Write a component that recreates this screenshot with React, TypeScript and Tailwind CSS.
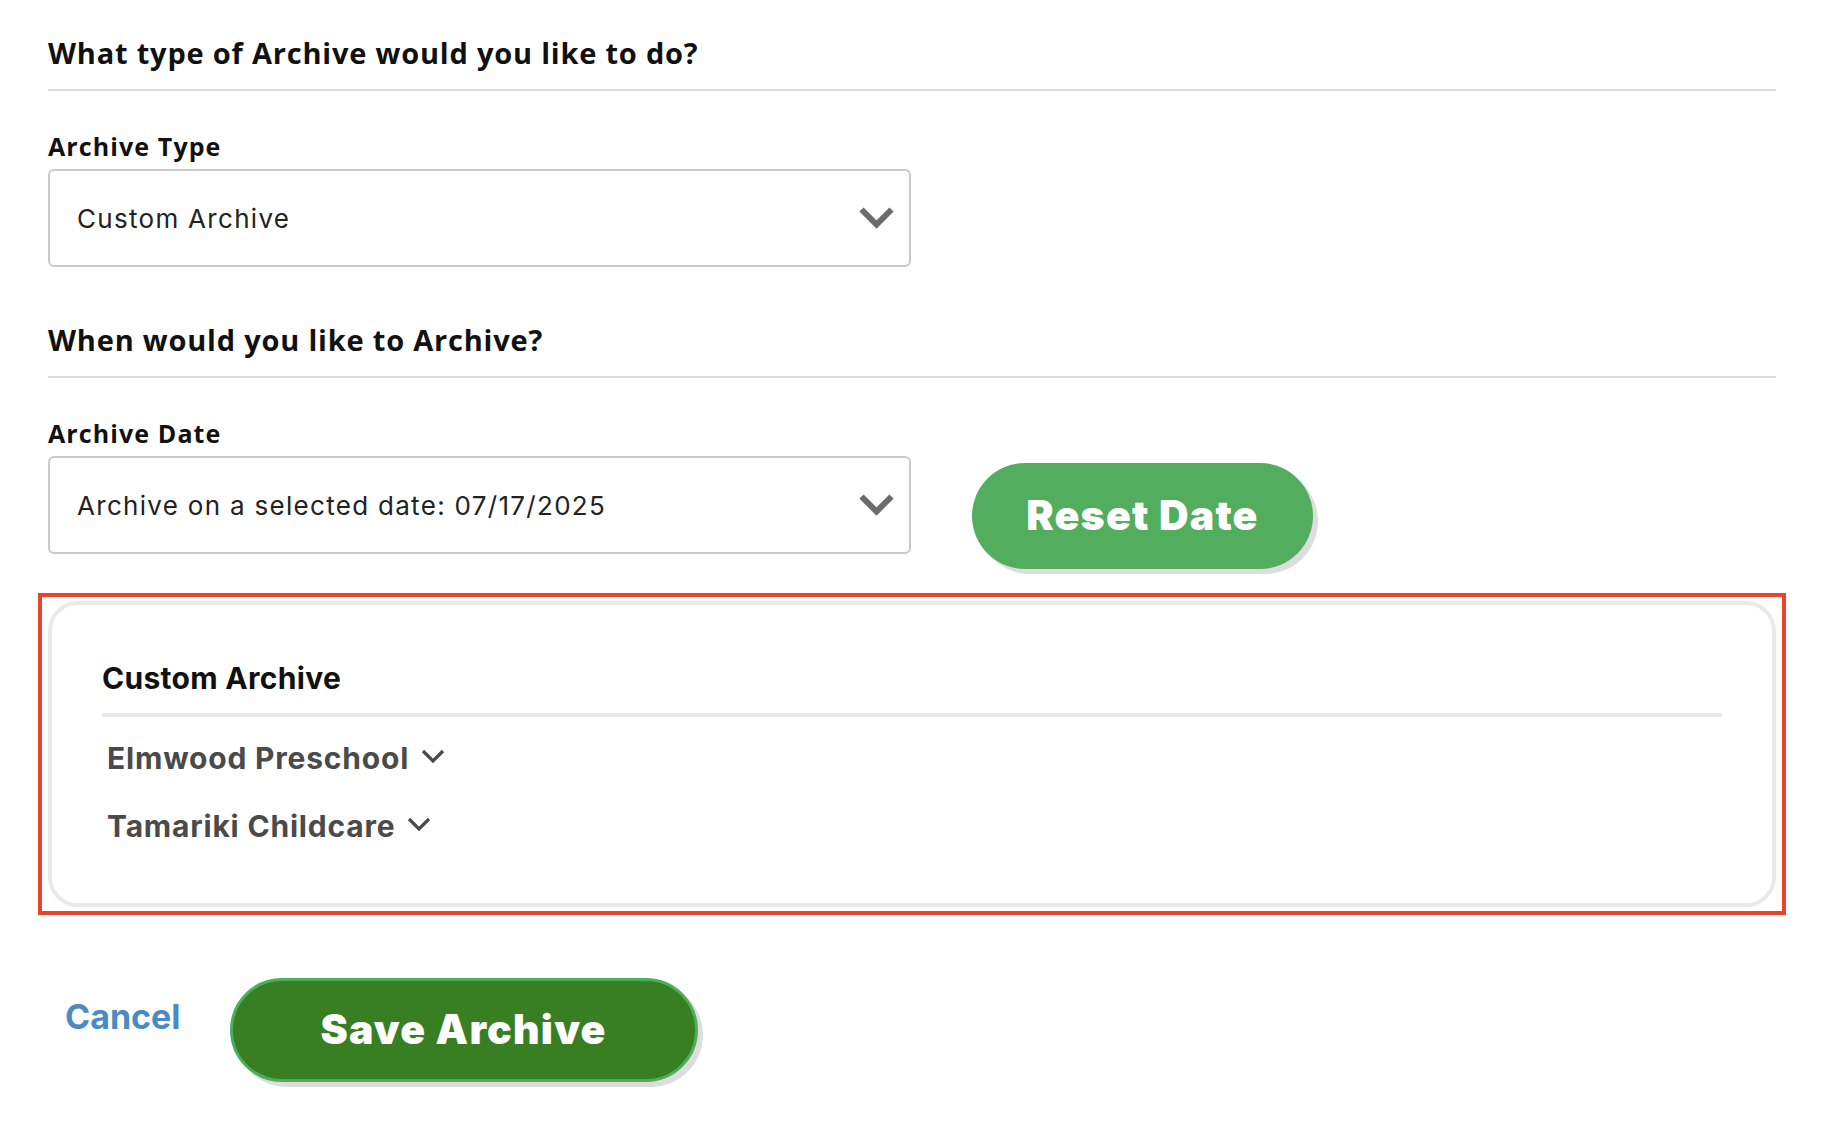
import { ReactNode } from "react";

function SelectChevron() {
  return (
    <svg width="35" height="22" viewBox="0 0 35 22" fill="none" className="shrink-0">
      <path d="M2.5 2.5L17.5 17.5L32.5 2.5" stroke="#6b6b6b" strokeWidth="6" />
    </svg>
  );
}

function SmallChevron() {
  return (
    <svg width="24" height="15" viewBox="0 0 24 15" fill="none" className="shrink-0 -translate-y-[2px]">
      <path d="M2 2L12 12L22 2" stroke="#4a4a4a" strokeWidth="3.2" />
    </svg>
  );
}

function SectionHeading({ children }: { children: ReactNode }) {
  return (
    <h2 className="border-b-2 border-[#dddddd] pb-[18px] font-['Open_Sans',sans-serif] text-[29px] font-bold leading-[36px] tracking-[0.8px] text-[#111111]">
      {children}
    </h2>
  );
}

function SelectBox({ value }: { value: string }) {
  return (
    <div className="mt-[8px] flex h-[98px] w-[863px] items-center justify-between rounded-[6px] border-2 border-[#c8c8c8] pl-[27px] pr-[15px]">
      <span className="font-['Inter',sans-serif] text-[26px] tracking-[1.3px] text-[#222222]">{value}</span>
      <SelectChevron />
    </div>
  );
}

function FieldLabel({ children }: { children: ReactNode }) {
  return (
    <label className="mt-[40px] block font-['Open_Sans',sans-serif] text-[25px] font-bold leading-[30px] tracking-[1.1px] text-[#111111]">
      {children}
    </label>
  );
}

const schools = ["Elmwood Preschool", "Tamariki Childcare"];

export default function App() {
  return (
    <div className="min-h-screen bg-white">
      <div className="ml-[48px] w-[1728px] pt-[35px]">
        <SectionHeading>What type of Archive would you like to do?</SectionHeading>
        <FieldLabel>Archive Type</FieldLabel>
        <SelectBox value="Custom Archive" />

        <div className="mt-[55px]">
          <SectionHeading>When would you like to Archive?</SectionHeading>
        </div>
        <FieldLabel>Archive Date</FieldLabel>
        <div className="flex items-start gap-[61px]">
          <SelectBox value="Archive on a selected date: 07/17/2025" />
          <button className="mt-[15px] h-[106px] w-[341px] rounded-full bg-[#52ad5e] font-['Inter',sans-serif] text-[41px] font-black tracking-[1.2px] text-white shadow-[5px_5px_0_#dddddd]">
            Reset Date
          </button>
        </div>

        <div className="-mx-[10px] mt-[24px] border-4 border-[#e8452c] px-[6px] py-[4px]">
          <div className="rounded-[30px] border-4 border-[#e9e9e9] px-[50px] pb-[59px] pt-[55px]">
            <h3 className="border-b-4 border-[#e8e8e8] pb-[17px] font-['Inter',sans-serif] text-[30px] font-bold leading-[36px] tracking-[0.3px] text-[#111111]">
              Custom Archive
            </h3>
            <div className="mt-[23px] flex flex-col gap-[32px] pl-[5px]">
              {schools.map((s) => (
                <div key={s} className="flex items-center gap-[12px]">
                  <span className="font-['Inter',sans-serif] text-[30px] font-bold leading-[36px] tracking-[0.8px] text-[#4a4a4a]">{s}</span>
                  <SmallChevron />
                </div>
              ))}
            </div>
          </div>
        </div>

        <div className="mt-[63px] flex items-start gap-[49px]">
          <button className="mt-[17px] pl-[17px] font-['Inter',sans-serif] text-[34px] font-bold leading-[44px] text-[#4a8bc3]">
            Cancel
          </button>
          <button className="h-[104px] w-[468px] rounded-full border-[3px] border-[#4caf5a] bg-[#387e23] font-['Inter',sans-serif] text-[41px] font-black tracking-[1.2px] text-white shadow-[5px_5px_0_#dddddd]">
            Save Archive
          </button>
        </div>
      </div>
    </div>
  );
}
